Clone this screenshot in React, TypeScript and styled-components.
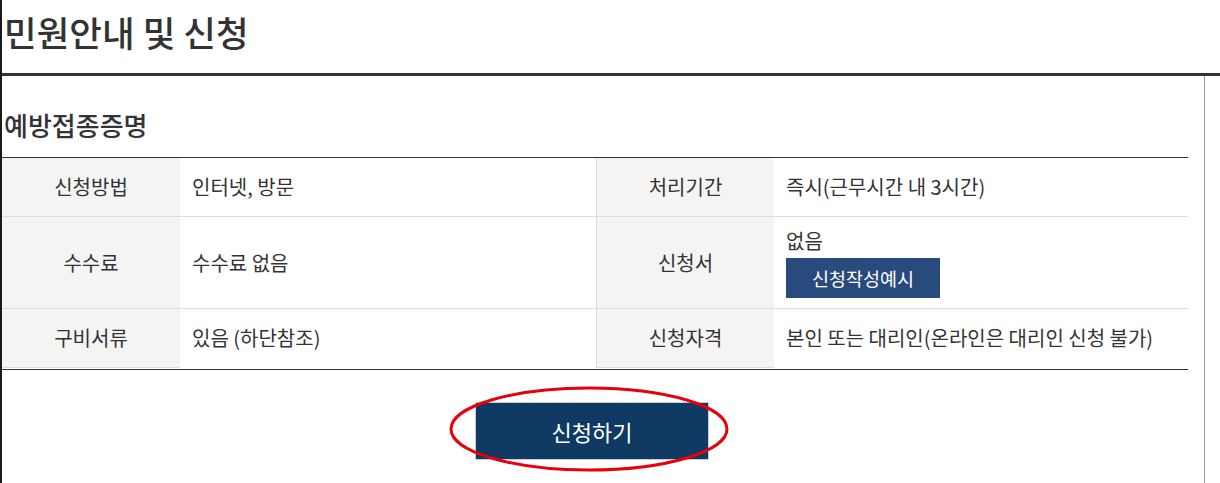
import React from 'react';
import styled, {createGlobalStyle} from 'styled-components';

const GlobalStyle = createGlobalStyle`
  html, body {
    margin: 0;
    padding: 0;
    background: #fff;
  }
  body {
    font-family: "Noto Sans CJK KR", "Noto Sans", sans-serif;
    color: #333;
  }
`;

const Page = styled.div`
  border-left: 2px solid #1a1a1a;
  min-height: 483px;
  box-sizing: border-box;
`;

const Header = styled.div`
  height: 76px;
  box-sizing: border-box;
  padding: 11px 0 0 2px;
  border-bottom: 3px solid #333;
`;

const Title = styled.h1`
  margin: 0;
  font-size: 35.5px;
  font-weight: 500;
  line-height: 42px;
  color: #333;
`;

const Content = styled.div`
  width: 1203px;
  box-sizing: border-box;
  border-right: 1px solid #999;
  padding: 0 16px 23px 0;
  min-height: 407px;
`;

const SubTitle = styled.h2`
  margin: 0;
  padding: 32px 0 15px 2px;
  font-size: 26px;
  font-weight: 500;
  line-height: 34px;
  color: #333;
`;

const InfoTable = styled.div`
  display: grid;
  grid-template-columns: 178px 416px 178px 414px;
  border-top: 1px solid #333;
  border-bottom: 1px solid #333;
  padding-bottom: 1px;
`;

const Label = styled.div<{$bordered?: boolean; $height: number}>`
  display: flex;
  align-items: center;
  justify-content: center;
  height: ${(p) => p.$height}px;
  box-sizing: border-box;
  background: #f4f4f4;
  border-bottom: 1px solid #ddd;
  border-left: ${(p) => (p.$bordered ? '1px solid #ddd' : 'none')};
  font-size: 20px;
  line-height: 26px;
`;

const Value = styled.div<{$last?: boolean; $height: number; $stacked?: boolean}>`
  display: flex;
  flex-direction: ${(p) => (p.$stacked ? 'column' : 'row')};
  align-items: ${(p) => (p.$stacked ? 'flex-start' : 'center')};
  justify-content: ${(p) => (p.$stacked ? 'center' : 'flex-start')};
  height: ${(p) => p.$height}px;
  box-sizing: border-box;
  padding: 0 12px;
  border-bottom: ${(p) => (p.$last ? '1px solid transparent' : '1px solid #ddd')};
  font-size: 20px;
  line-height: 26px;
`;

const SampleButton = styled.button`
  margin-top: 4px;
  width: 154px;
  height: 40px;
  border: none;
  background: #284a7c;
  color: #fff;
  font-family: inherit;
  font-size: 18.5px;
  cursor: pointer;
`;

const Actions = styled.div`
  display: flex;
  justify-content: center;
  padding: 32px 6px 0 0;
`;

const ApplyWrap = styled.div`
  position: relative;
`;

const ApplyButton = styled.button`
  display: block;
  width: 234px;
  height: 58px;
  border: 1px solid #ccc;
  background: #0f3a63;
  color: #fff;
  font-family: inherit;
  font-size: 22px;
  cursor: pointer;
`;

const Marker = styled.svg`
  position: absolute;
  left: -27px;
  top: -17px;
  pointer-events: none;
`;

const rows = [
  {a: '신청방법', b: '인터넷, 방문', c: '처리기간', d: '즉시(근무시간 내 3시간)', h: 59},
  {a: '수수료', b: '수수료 없음', c: '신청서', d: '없음', h: 92, sample: true},
  {a: '구비서류', b: '있음 (하단참조)', c: '신청자격', d: '본인 또는 대리인(온라인은 대리인 신청 불가)', h: 59},
];

export default function App() {
  return (
    <>
      <GlobalStyle />
      <Page>
        <Header>
          <Title>민원안내 및 신청</Title>
        </Header>
        <Content>
          <SubTitle>예방접종증명</SubTitle>
          <InfoTable>
            {rows.map((r, i) => {
              const last = i === rows.length - 1;
              return (
                <React.Fragment key={r.a}>
                  <Label $height={r.h}>{r.a}</Label>
                  <Value $height={r.h} $last={last}>{r.b}</Value>
                  <Label $height={r.h} $bordered>{r.c}</Label>
                  <Value $height={r.h} $last={last} $stacked={r.sample}>
                    <span>{r.d}</span>
                    {r.sample && <SampleButton>신청작성예시</SampleButton>}
                  </Value>
                </React.Fragment>
              );
            })}
          </InfoTable>
          <Actions>
            <ApplyWrap>
              <ApplyButton>신청하기</ApplyButton>
              <Marker width="282" height="88" viewBox="0 0 282 88">
                <ellipse cx="141" cy="44" rx="138" ry="41" fill="none" stroke="#e8000b" strokeWidth="3" />
              </Marker>
            </ApplyWrap>
          </Actions>
        </Content>
      </Page>
    </>
  );
}
